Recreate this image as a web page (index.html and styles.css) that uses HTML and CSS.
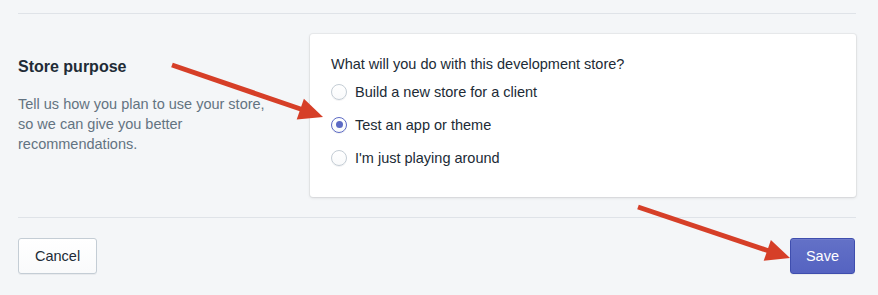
FILE: index.html
```html
<!DOCTYPE html>
<html lang="en">
<head>
    <meta charset="UTF-8">
    <meta name="viewport" content="width=device-width, initial-scale=1.0">
    <title>Store purpose</title>
    <link rel="stylesheet" href="styles.css">
</head>
<body>
    <div class="page">
        <section class="annotated">
            <div class="annotation">
                <h2>Store purpose</h2>
                <p class="annotation-text">
                    Tell us how you plan to use your store, so we can give you better recommendations.
                </p>
            </div>

            <div class="card">
                <p class="question">What will you do with this development store?</p>
                <label class="choice">
                    <input type="radio" name="purpose">
                    <span>Build a new store for a client</span>
                </label>
                <label class="choice">
                    <input type="radio" name="purpose" checked>
                    <span>Test an app or theme</span>
                </label>
                <label class="choice">
                    <input type="radio" name="purpose">
                    <span>I'm just playing around</span>
                </label>
            </div>
        </section>

        <footer class="actions">
            <button class="btn">Cancel</button>
            <button class="btn btn-primary">Save</button>
        </footer>
    </div>

    <!-- annotation arrows drawn over the screenshot -->
    <svg class="arrows" width="878" height="295" viewBox="0 0 878 295">
        <line x1="172" y1="65" x2="302" y2="109.5" />
        <polygon points="323,117 303.9,98.8 296.7,119.6" />
        <line x1="638" y1="207" x2="769" y2="251" />
        <polygon points="790,258 770.9,240 763.7,260.8" />
    </svg>
</body>
</html>
```

FILE: styles.css
```css
* {
    margin: 0;
    padding: 0;
    box-sizing: border-box;
}

body {
    font-family: "Liberation Sans", Arial, sans-serif;
    background: #f4f6f8;
    color: #212b36;
    width: 878px;
    height: 295px;
    overflow: hidden;
    position: relative;
}

.page {
    padding: 13px 22px 0 18px;
}

.annotated {
    display: grid;
    grid-template-columns: 292px 1fr;
    border-top: 1px solid #dfe3e8;
    border-bottom: 1px solid #dfe3e8;
    padding: 20px 0 20px;
}

.annotation h2 {
    font-size: 16px;
    font-weight: 600;
    line-height: 24px;
    margin-top: 21px;
}

.annotation-text {
    color: #637381;
    font-size: 14.5px;
    line-height: 20px;
    margin-top: 15px;
    max-width: 262px;
}

.card {
    background: white;
    border-radius: 3px;
    box-shadow: 0 0 0 1px rgba(63, 63, 68, 0.05), 0 1px 3px 0 rgba(63, 63, 68, 0.15);
    padding: 20px 20px 23px 21px;
}

.question {
    font-size: 14.5px;
    line-height: 20px;
    margin-bottom: 1px;
}

.choice {
    display: flex;
    align-items: center;
    height: 33px;
    font-size: 14.5px;
}

.choice input {
    appearance: none;
    width: 16px;
    height: 16px;
    border-radius: 50%;
    border: 1px solid #c4cdd5;
    background: linear-gradient(180deg, #ffffff, #f9fafb);
    box-shadow: 0 1px 0 rgba(22, 29, 37, 0.05);
    margin-right: 8px;
    display: grid;
    place-items: center;
    flex-shrink: 0;
}

.choice input:checked {
    border: 1.5px solid #5c6ac4;
}

.choice input:checked::after {
    content: "";
    width: 7px;
    height: 7px;
    border-radius: 50%;
    background: #5c6ac4;
}

.actions {
    display: flex;
    justify-content: space-between;
    padding: 20px 1px 0 0;
}

.btn {
    font-family: inherit;
    font-size: 14.5px;
    color: #212b36;
    height: 36px;
    padding: 0 16px;
    background: linear-gradient(180deg, #ffffff, #f9fafb);
    border: 1px solid #c4cdd5;
    border-radius: 3px;
    box-shadow: 0 1px 0 rgba(22, 29, 37, 0.05);
}

.btn-primary {
    color: white;
    padding: 0 15px;
    background: linear-gradient(180deg, #6371c7, #5563c1);
    border-color: #3f4eae;
    box-shadow: inset 0 1px 0 #6f7bcb, 0 1px 0 rgba(22, 29, 37, 0.05);
}

.arrows {
    position: absolute;
    top: 0;
    left: 0;
    pointer-events: none;
}

.arrows line {
    stroke: #d63f28;
    stroke-width: 5;
}

.arrows polygon {
    fill: #d63f28;
}
```
